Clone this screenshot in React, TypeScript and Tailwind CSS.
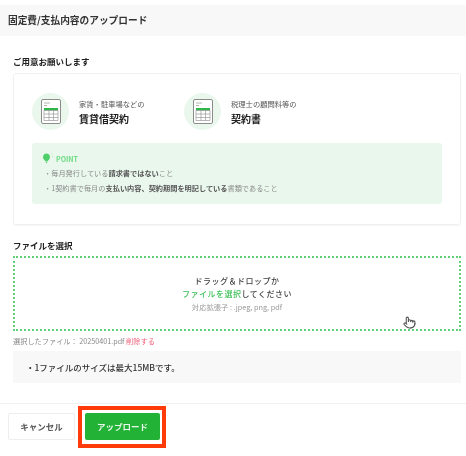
import { Pointer } from "lucide-react";

const JP_FONT = "font-['Noto_Sans_CJK_JP','Noto_Sans',sans-serif]";

function DocIcon() {
	return (
		<div className="flex size-[37px] shrink-0 items-center justify-center rounded-full bg-[#e9f7ec]">
			<svg width="20" height="25" viewBox="0 0 20 25" fill="none">
				<rect x="0.5" y="0.5" width="19" height="24" rx="1.5" fill="#fff" stroke="#8c8c8c" />
				<path d="M3 4h6M3 6.5h3" stroke="#b5b5b5" />
				<rect x="3" y="9" width="14" height="2.5" fill="#2fb84a" />
				<path d="M3 11.5h14v10H3zM3 15h14M3 18.5h14M8 11.5v10M12.5 11.5v10" stroke="#9a9a9a" strokeWidth="0.7" />
			</svg>
		</div>
	);
}

function DocItem({ sub, title }: { sub: string; title: string }) {
	return (
		<div className="flex items-center gap-[10px]">
			<DocIcon />
			<div className="flex flex-col gap-[3px]">
				<p className="text-[7.3px] leading-[10px] text-[#555]">{sub}</p>
				<p className="text-[10px] leading-[13px] font-bold text-[#222]">{title}</p>
			</div>
		</div>
	);
}

export default function App() {
	return (
		<div className={`relative h-[456px] w-[466px] overflow-hidden bg-white ${JP_FONT}`}>
			<div className="pt-[5px] blur-[0.35px]">
				<header className="flex h-[31px] items-center bg-[#f8f8f8] pl-2 text-[9.7px] font-bold text-[#333]">
					固定費/支払内容のアップロード
				</header>

				<div className="pr-[5px] pl-[13px]">
					<h3 className="mt-[19px] text-[8.5px] leading-[12px] font-bold text-[#222]">ご用意お願いします</h3>
					<section className="mt-[6px] h-[152px] rounded-[3px] border border-[#f0f0f0] px-[18px] pt-[19px] shadow-[0_1px_1px_rgba(0,0,0,0.04)]">
						<div className="flex gap-[116px]">
							<div className="w-[36px]">
								<div className="w-[140px]">
									<DocItem sub="家賃・駐車場などの" title="賃貸借契約" />
								</div>
							</div>
							<DocItem sub="税理士の顧問料等の" title="契約書" />
						</div>
						<div className="mt-[13px] h-[61px] rounded-[3px] bg-[#e9f7ec] px-[10px] pt-[10px]">
							<p className="flex items-center gap-[2px] text-[7px] leading-[10px] font-bold text-[#6fdc85]">
								<svg width="12" height="11" viewBox="0 0 12 11">
									<path d="M4.5 0.5a3.6 3.6 0 0 1 2.4 6.2L5.7 8H3.3L2.1 6.7A3.6 3.6 0 0 1 4.5 0.5zM3.3 8.6h2.4L4.5 10.5z" fill="#4fd06b" />
									<path d="M9.5 1.5l1-.6M10 3.6h1.2" stroke="#8fe3a2" strokeWidth="0.6" />
								</svg>
								POINT
							</p>
							<ul className="mt-[4px] flex flex-col gap-[5px] pl-[2px] text-[7.2px] leading-[10px] text-[#8a8a8a]">
								<li>
									・毎月発行している<span className="font-bold text-[#555]">請求書ではない</span>こと
								</li>
								<li>
									・1契約書で毎月の<span className="font-bold text-[#555]">支払い内容、契約期間を明記している</span>書類であること
								</li>
							</ul>
						</div>
					</section>

					<h3 className="mt-[14px] text-[8.5px] leading-[12px] font-bold text-[#222]">ファイルを選択</h3>
					<div className="relative mt-[5px] flex h-[75px] flex-col items-center justify-center border-2 border-dotted border-[#5fd076] text-center">
						<p className="text-[8px] leading-[13px] font-medium tracking-[0.5px] text-[#444]">ドラッグ＆ドロップか</p>
						<p className="text-[8px] leading-[13px] font-medium tracking-[0.5px] text-[#444]">
							<span className="text-[#3fc25a]">ファイルを選択</span>してください
						</p>
						<p className="mt-[1px] text-[7.3px] leading-[12px] text-[#999]">対応拡張子 : .jpeg, png, pdf</p>
						<Pointer className="absolute top-[58px] left-[388px] size-[13px] text-[#555]" />
					</div>
					<p className="mt-[5px] text-[7.2px] leading-[10px] text-[#888]">
						選択したファイル： 20250401.pdf <span className="text-[#f0647c]">削除する</span>
					</p>
					<div className="mt-[5px] flex h-[32px] items-center bg-[#f8f8f8] pl-[13px] text-[8.5px] font-medium text-[#333]">
						・1ファイルのサイズは最大15MBです。
					</div>
				</div>

				<footer className="mt-[20px] flex gap-[10px] border-t border-[#f0f0f0] pt-[9px] pl-2">
					<button type="button" className="h-[27px] w-[67px] rounded-[2px] border border-[#eee] text-[8.5px] font-bold text-[#555]">
						キャンセル
					</button>
					<button type="button" className="h-[27px] w-[75px] rounded-[2px] bg-[#21b236] text-[8.5px] font-bold text-[#e6f7e9]">
						アップロード
					</button>
				</footer>
			</div>

			{/* 赤枠のハイライト */}
			<div className="absolute top-[406px] left-[78px] h-[42px] w-[88px] border-4 border-[#ff3b0a]" />
		</div>
	);
}
